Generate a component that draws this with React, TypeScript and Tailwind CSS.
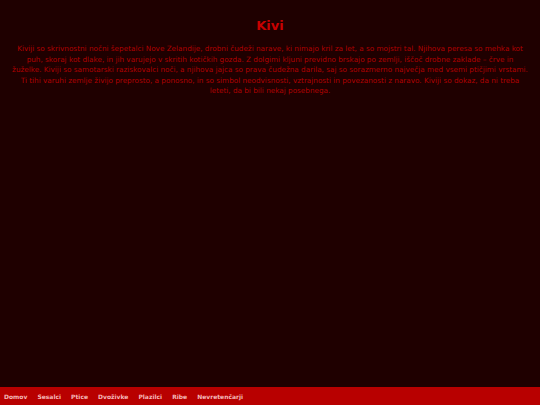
const navItems = ['Domov', 'Sesalci', 'Ptice', 'Dvoživke', 'Plazilci', 'Ribe', 'Nevretenčarji'];

const lines = [
  'Kiviji so skrivnostni nočni šepetalci Nove Zelandije, drobni čudeži narave, ki nimajo kril za let, a so mojstri tal. Njihova peresa so mehka kot',
  'puh, skoraj kot dlake, in jih varujejo v skritih kotičkih gozda. Z dolgimi kljuni previdno brskajo po zemlji, iščoč drobne zaklade – črve in',
  'žuželke. Kiviji so samotarski raziskovalci noči, a njihova jajca so prava čudežna darila, saj so sorazmerno največja med vsemi ptičjimi vrstami.',
  'Ti tihi varuhi zemlje živijo preprosto, a ponosno, in so simbol neodvisnosti, vztrajnosti in povezanosti z naravo. Kiviji so dokaz, da ni treba',
  'leteti, da bi bili nekaj posebnega.',
];

export default function App() {
  return (
    <div className="flex h-[405px] w-[540px] flex-col bg-[#1f0000] font-['DejaVu_Sans','Noto_Sans',sans-serif]">
      <main className="flex-1 px-[4px] pt-[18px]">
        <h1 className="text-center text-[13px] font-bold leading-[16px] text-[#c80000]">Kivi</h1>
        <p className="mt-[10px] text-center text-[7.25px] leading-[10.5px] text-[#b00000]">
          {lines.map((line, i) => (
            <span key={i} className="block whitespace-nowrap">
              {line}
            </span>
          ))}
        </p>
      </main>
      <nav className="flex h-[18px] items-center gap-[10px] bg-[#b80000] px-[4px]">
        {navItems.map((item) => (
          <a key={item} className="text-[6px] font-bold text-[#f4b8b8]">
            {item}
          </a>
        ))}
      </nav>
    </div>
  );
}
